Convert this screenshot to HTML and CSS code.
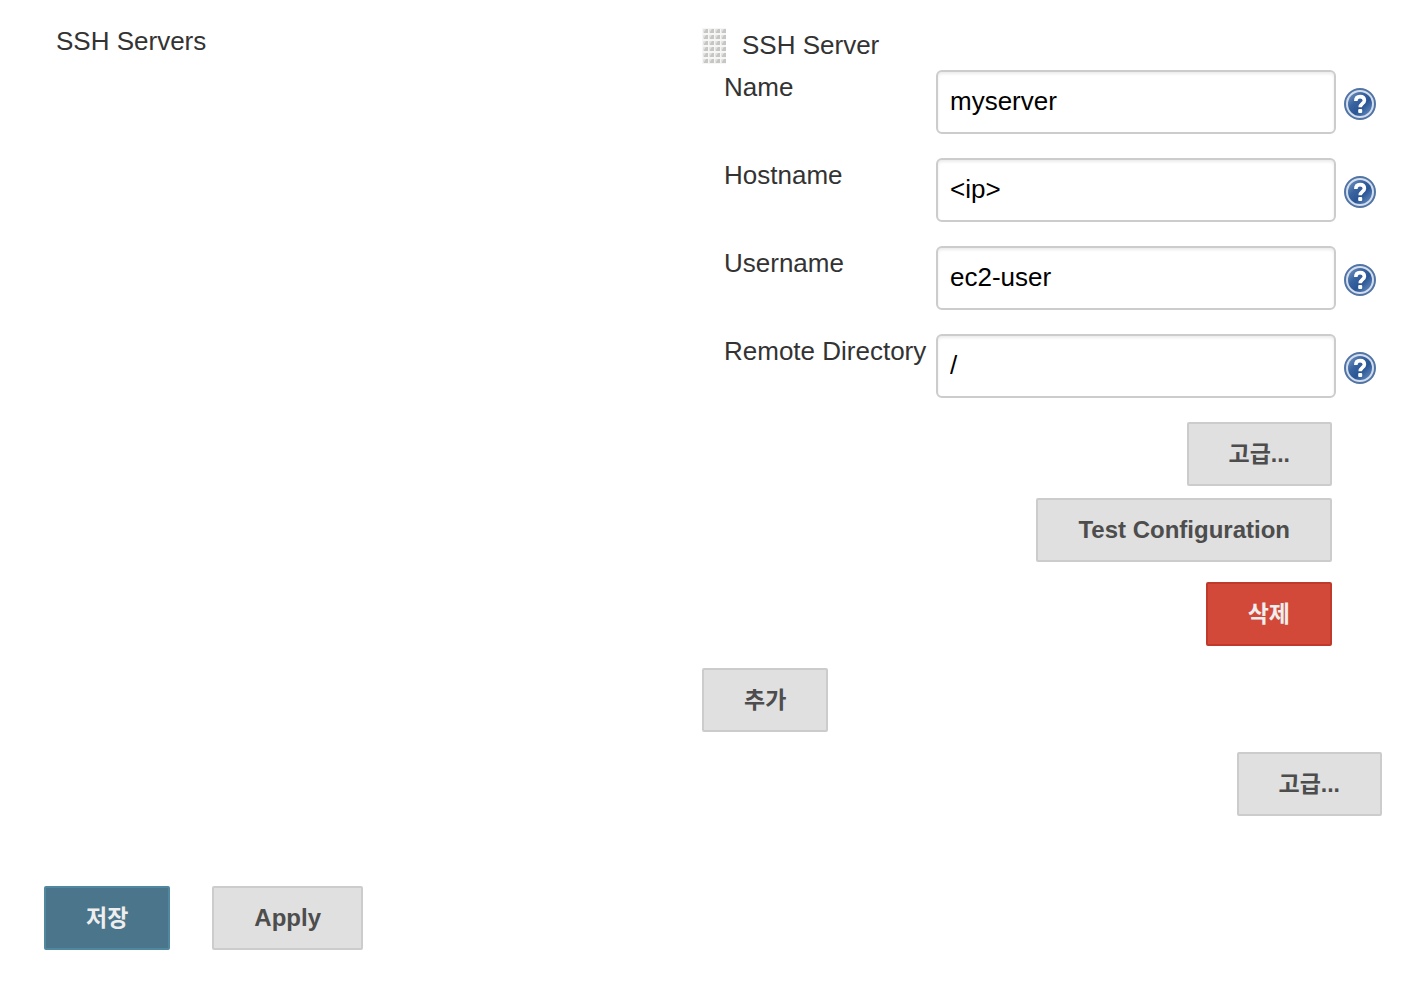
FILE: index.html
```html
<!DOCTYPE html>
<html lang="ko">
<head>
<meta charset="utf-8">
<meta name="viewport" content="width=device-width, initial-scale=1">
<title>SSH Servers</title>
<link rel="stylesheet" href="styles.css">
</head>
<body>
<svg class="defs" width="0" height="0" aria-hidden="true">
  <defs>
    <linearGradient id="ball" x1="0" y1="0" x2="1" y2="1">
      <stop offset="0" stop-color="#7d9ac4"/>
      <stop offset="0.35" stop-color="#3a64a0"/>
      <stop offset="0.6" stop-color="#2a5594"/>
      <stop offset="1" stop-color="#6f96c8"/>
    </linearGradient>
    <symbol id="help" viewBox="0 0 32 32">
      <circle cx="16" cy="16" r="15" fill="#d3deec" stroke="#5274a5" stroke-width="2"/>
      <circle cx="16" cy="16" r="12" fill="url(#ball)"/>
      <path d="M11.8 13C11.8 10 13.4 8.6 16 8.6c2.7 0 4.4 1.4 4.4 3.8 0 3.2-4.2 3.4-4.2 6.8" fill="none" stroke="#fff" stroke-width="3.6"/>
      <rect x="14.2" y="21" width="4" height="4" rx="1" fill="#fff"/>
    </symbol>
  </defs>
</svg>
<form class="config" onsubmit="return false">
  <div class="section">
    <div class="section-name">SSH Servers</div>
    <div class="section-body">
      <fieldset class="server" aria-labelledby="server-title">
        <div class="server-head">
          <svg class="handle" viewBox="0 0 24 36" aria-hidden="true">
            <defs>
              <pattern id="grip" width="6" height="6" patternUnits="userSpaceOnUse">
                <rect width="6" height="6" fill="#f6f6f6"/>
                <rect x="1" y="1" width="5" height="4" rx="1" fill="#e2e2e0"/>
                <path d="M2 5V4L4 1H6V5Z" fill="#c6c6c3"/>
              </pattern>
            </defs>
            <rect width="24" height="36" fill="url(#grip)"/>
          </svg>
          <span id="server-title">SSH Server</span>
        </div>
        <div class="row">
          <label for="name">Name</label>
          <input id="name" type="text" value="myserver">
          <button class="help" type="button" aria-label="Help for Name"><svg><use href="#help"/></svg></button>
        </div>
        <div class="row">
          <label for="host">Hostname</label>
          <input id="host" type="text" value="&lt;ip&gt;">
          <button class="help" type="button" aria-label="Help for Hostname"><svg><use href="#help"/></svg></button>
        </div>
        <div class="row">
          <label for="user">Username</label>
          <input id="user" type="text" value="ec2-user">
          <button class="help" type="button" aria-label="Help for Username"><svg><use href="#help"/></svg></button>
        </div>
        <div class="row">
          <label for="dir">Remote Directory</label>
          <input id="dir" type="text" value="/">
          <button class="help" type="button" aria-label="Help for Remote Directory"><svg><use href="#help"/></svg></button>
        </div>
        <div class="server-actions">
          <button class="btn ko" type="button">고급...</button>
          <button class="btn" type="button">Test Configuration</button>
          <button class="btn ko danger" type="button">삭제</button>
        </div>
      </fieldset>
      <button class="btn ko add" type="button">추가</button>
      <button class="btn ko advanced" type="button">고급...</button>
    </div>
  </div>
  <div class="footer">
    <button class="btn ko primary" type="submit">저장</button>
    <button class="btn" type="button">Apply</button>
  </div>
</form>
</body>
</html>
```
FILE: styles.css
```css
* {
  box-sizing: border-box;
}

body {
  margin: 0;
  background: #fff;
  color: #333;
  font: 26px/34px "Liberation Sans", "Noto Sans CJK KR", sans-serif;
}

.defs {
  position: absolute;
}

.config {
  padding: 24px 28px 36px 44px;
}

.section {
  display: grid;
  grid-template-columns: 646px 1fr;
  padding-left: 12px;
}

.section-body {
  display: flex;
  flex-direction: column;
  gap: 20px;
  padding-top: 4px;
}

.server {
  min-width: 0;
  margin: 0;
  padding: 0;
  border: 0;
}

.server-head {
  display: flex;
  gap: 16px;
  height: 42px;
}

.handle {
  width: 24px;
  height: 36px;
}

.row {
  display: grid;
  grid-template-columns: 204px 1fr 32px;
  gap: 8px;
  margin-bottom: 24px;
  padding: 0 6px 0 22px;
}

.row label {
  white-space: nowrap;
}

.row input {
  width: 100%;
  min-width: 0;
  height: 64px;
  padding: 0 12px 2px;
  border: 2px solid #ccc;
  border-radius: 6px;
  background: #fff;
  box-shadow: inset 0 2px 3px rgba(0, 0, 0, 0.08);
  color: #000;
  font: inherit;
}

.help {
  width: 32px;
  height: 32px;
  margin-top: 18px;
  padding: 0;
  border: 0;
  background: none;
}

.help svg {
  display: block;
  width: 32px;
  height: 32px;
}

.server-actions {
  display: flex;
  flex-direction: column;
  align-items: flex-end;
  gap: 12px;
  padding-right: 50px;
}

.btn {
  height: 64px;
  padding: 0 40px;
  border: 2px solid #ccc;
  border-radius: 2px;
  background: #e0e0e0;
  color: #4d4d4d;
  font: bold 24px/32px "Liberation Sans", "Noto Sans CJK KR", sans-serif;
}

.ko {
  font-size: 23px;
}

.danger {
  margin-top: 8px;
  border-color: #c03a2b;
  background: #d24939;
  color: #eee;
}

.primary {
  border-color: #5088a0;
  background: #4b758b;
  color: #eee;
}

.add {
  align-self: flex-start;
  margin-top: 2px;
}

.advanced {
  align-self: flex-end;
}

.footer {
  display: flex;
  gap: 42px;
  margin-top: 70px;
}
```
